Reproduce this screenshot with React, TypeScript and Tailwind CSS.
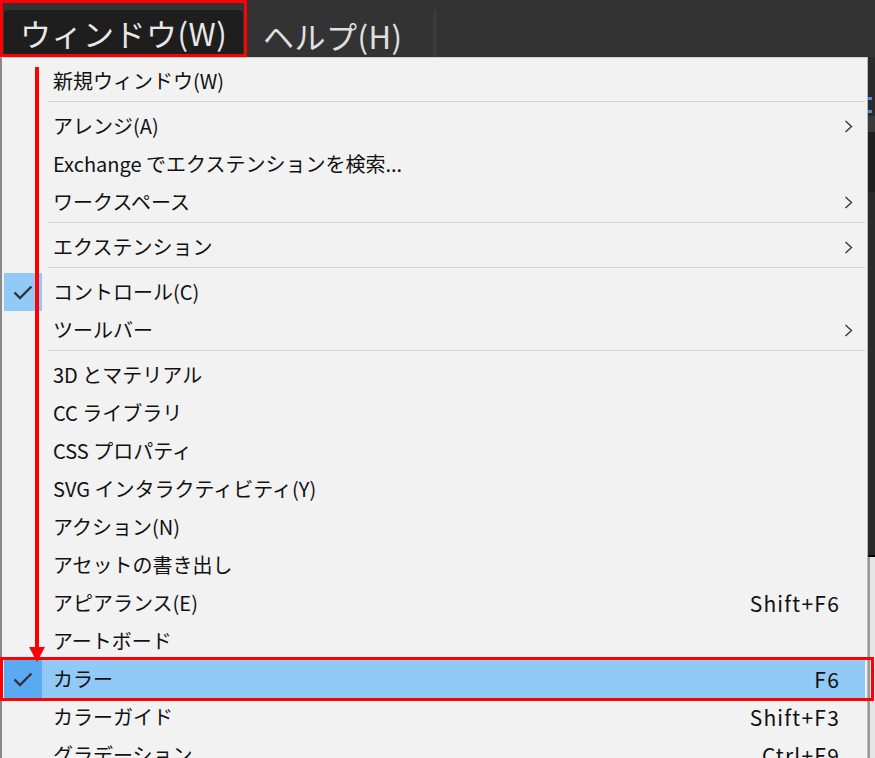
import React from "react";

type Item =
  | { kind: "sep" }
  | { kind: "item"; label: string; shortcut?: string; sub?: boolean; checked?: boolean; active?: boolean };

const items: Item[] = [
  { kind: "item", label: "新規ウィンドウ(W)" },
  { kind: "sep" },
  { kind: "item", label: "アレンジ(A)", sub: true },
  { kind: "item", label: "Exchange でエクステンションを検索..." },
  { kind: "item", label: "ワークスペース", sub: true },
  { kind: "sep" },
  { kind: "item", label: "エクステンション", sub: true },
  { kind: "sep" },
  { kind: "item", label: "コントロール(C)", checked: true },
  { kind: "item", label: "ツールバー", sub: true },
  { kind: "sep" },
  { kind: "item", label: "3D とマテリアル" },
  { kind: "item", label: "CC ライブラリ" },
  { kind: "item", label: "CSS プロパティ" },
  { kind: "item", label: "SVG インタラクティビティ(Y)" },
  { kind: "item", label: "アクション(N)" },
  { kind: "item", label: "アセットの書き出し" },
  { kind: "item", label: "アピアランス(E)", shortcut: "Shift+F6" },
  { kind: "item", label: "アートボード" },
  { kind: "item", label: "カラー", shortcut: "F6", checked: true, active: true },
  { kind: "item", label: "カラーガイド", shortcut: "Shift+F3" },
  { kind: "item", label: "グラデーション", shortcut: "Ctrl+F9" },
];

const font = { fontFamily: '"Noto Sans CJK JP", "Noto Sans", sans-serif' };

function Check() {
  return (
    <svg width="20" height="15" viewBox="0 0 20 15">
      <polyline points="1.5,7.5 7,13 18.5,1.5" fill="none" stroke="#333" strokeWidth="2.4" />
    </svg>
  );
}

function Chevron() {
  return (
    <svg width="9" height="13" viewBox="0 0 9 13">
      <polyline points="1.5,1 7.5,6.5 1.5,12" fill="none" stroke="#3a3a3a" strokeWidth="1.4" />
    </svg>
  );
}

export default function App() {
  return (
    <div className="relative w-[875px] h-[758px] overflow-hidden bg-[#333333]" style={font}>
      {/* menu bar */}
      <div className="h-[57px] flex items-end">
        <div className="relative h-[57px] w-[247px] border-[3px] border-[#ff0000] flex items-end">
          <div className="h-[44px] ml-px w-[239px] bg-[#1e1e1e] rounded-t-[4px] flex items-center pl-[16px] text-[31px] tracking-[0.5px] leading-none text-[#e8e8e8]">
            ウィンドウ(W)
          </div>
        </div>
        <div className="h-[44px] flex items-center pl-[16px] w-[186px] text-[31px] tracking-[0.5px] leading-none text-[#e0e0e0]">
          ヘルプ(H)
        </div>
        <div className="h-[47px] w-[4px] bg-[#3a3a3a]" />
      </div>

      <div className="flex h-[701px]">
        {/* dropdown */}
        <div className="w-[868px] bg-[#f2f2f2] border-l-2 border-l-[#8a8a8a] border-t border-t-[#cfcfcf] border-r border-r-[#b8b8b8] pt-[4px] text-[20px] text-[#111]">
          {items.map((it, i) =>
            it.kind === "sep" ? (
              <div key={i} className="h-[7px] pt-px pl-[46px] pr-[2px]">
                <div className="h-px bg-[#d2d2d2]" />
              </div>
            ) : (
              <div
                key={i}
                className={`h-[38px] mx-[2px] flex items-center ${it.active ? "bg-[#91c9f7]" : ""}`}
              >
                <div
                  className={`w-[38px] h-full flex items-center justify-center ${
                    it.checked ? (it.active ? "bg-[#5aaaf3]" : "bg-[#91c9f7]") : ""
                  }`}
                >
                  {it.checked && <Check />}
                </div>
                <div className="ml-[11px] flex-1 leading-none">{it.label}</div>
                {it.shortcut && (
                  <div className="leading-none mr-[25px] text-[21px] tracking-[1.2px]">{it.shortcut}</div>
                )}
                {it.sub && (
                  <div className="mr-[12px]">
                    <Chevron />
                  </div>
                )}
              </div>
            )
          )}
        </div>
        {/* background app on the right */}
        <div className="flex-1 flex flex-col">
          <div className="h-[498px] bg-[#2b2b2b] flex flex-col">
            <div className="h-[40px]" />
            <div className="h-[3px] w-[4px] bg-[#4a90d9]" />
            <div className="h-[10px]" />
            <div className="h-[3px] w-[4px] bg-[#4a90d9]" />
            <div className="h-[16px] bg-[#3a3a3a] mt-[3px]" />
            <div className="h-[60px] bg-[#1f1f1f]" />
          </div>
          <div className="h-[2px] bg-black" />
          <div className="flex-1 bg-[#e6e6e6] border-l-2 border-l-[#9a9a9a]" />
        </div>
      </div>

      {/* annotations */}
      <div className="absolute left-[35px] top-[67px] w-[4px] h-[584px] bg-[#ff0000]" />
      <svg className="absolute left-[29px] top-[647px]" width="16" height="15" viewBox="0 0 16 15">
        <polygon points="0,0 16,0 8,15" fill="#ff0000" />
      </svg>
      <div className="absolute left-0 top-[657px] w-[874px] h-[44px] border-[3px] border-[#ff0000]" />
    </div>
  );
}
